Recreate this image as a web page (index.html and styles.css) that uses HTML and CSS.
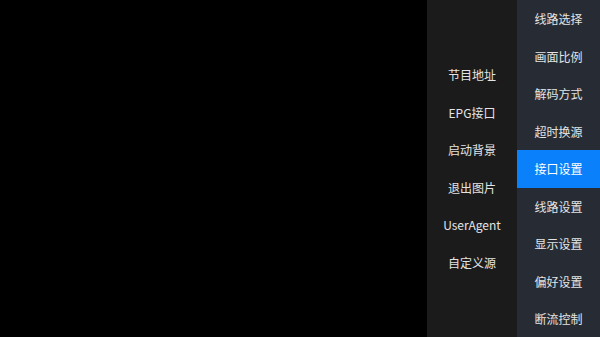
FILE: index.html
```html
<!DOCTYPE html>
<html>
<head>
<meta charset="utf-8">
<link rel="stylesheet" href="styles.css">
</head>
<body>
<div class="screen">
  <div class="stage"></div>
  <div class="sub">
    <div class="item">节目地址</div>
    <div class="item">EPG接口</div>
    <div class="item">启动背景</div>
    <div class="item">退出图片</div>
    <div class="item">UserAgent</div>
    <div class="item">自定义源</div>
  </div>
  <div class="menu">
    <div class="item">线路选择</div>
    <div class="item">画面比例</div>
    <div class="item">解码方式</div>
    <div class="item">超时换源</div>
    <div class="item active">接口设置</div>
    <div class="item">线路设置</div>
    <div class="item">显示设置</div>
    <div class="item">偏好设置</div>
    <div class="item">断流控制</div>
  </div>
</div>
</body>
</html>
```
FILE: styles.css
```css
html, body {
  margin: 0;
  padding: 0;
  background: #000;
}
.screen {
  width: 600px;
  height: 337px;
  display: flex;
  overflow: hidden;
  font-family: "Noto Sans CJK SC", "Noto Sans", sans-serif;
  font-size: 12px;
  color: #e4e4e4;
}
.stage {
  flex: 1;
  background: #000;
}
.sub {
  width: 90px;
  background: #1b1b1c;
  display: flex;
  flex-direction: column;
  justify-content: center;
}
.menu {
  width: 83px;
  background: #272c34;
  display: flex;
  flex-direction: column;
}
.item {
  height: 37.5px;
  flex: none;
  display: flex;
  align-items: center;
  justify-content: center;
  white-space: nowrap;
}
.menu .item.active {
  background: #0b80fb;
  color: #fff;
}
```
